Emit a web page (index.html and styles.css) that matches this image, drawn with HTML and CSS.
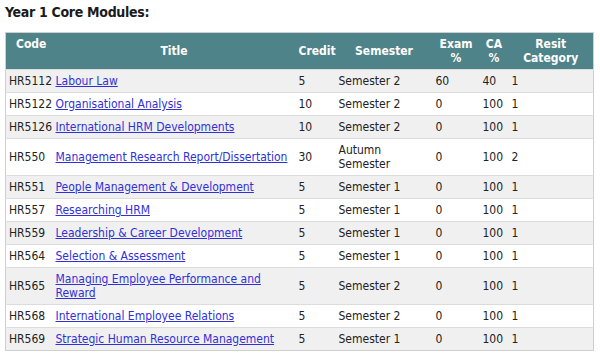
FILE: index.html
```html
<!DOCTYPE html>
<html lang="en">
<head>
    <meta charset="UTF-8">
    <title>Year 1 Core Modules</title>
    <link rel="stylesheet" href="styles.css">
</head>
<body>

    <h3 class="titulo">Year 1 Core Modules:</h3>

    <table class="modulos">
        <colgroup>
            <col class="col-code">
            <col class="col-title">
            <col class="col-credit">
            <col class="col-semester">
            <col class="col-exam">
            <col class="col-ca">
            <col class="col-resit">
        </colgroup>
        <thead>
            <tr>
                <th class="th-code">Code</th>
                <th>Title</th>
                <th>Credit</th>
                <th>Semester</th>
                <th class="th-top">Exam<br>%</th>
                <th class="th-top">CA<br>%</th>
                <th class="th-top">Resit<br>Category</th>
            </tr>
        </thead>
        <tbody>
            <tr>
                <td>HR5112</td><td><a href="#">Labour Law</a></td><td>5</td><td>Semester 2</td><td>60</td><td>40</td><td>1</td>
            </tr>
            <tr>
                <td>HR5122</td><td><a href="#">Organisational Analysis</a></td><td>10</td><td>Semester 2</td><td>0</td><td>100</td><td>1</td>
            </tr>
            <tr>
                <td>HR5126</td><td><a href="#">International HRM Developments</a></td><td>10</td><td>Semester 2</td><td>0</td><td>100</td><td>1</td>
            </tr>
            <tr>
                <td>HR550</td><td><a href="#">Management Research Report/Dissertation</a></td><td>30</td><td>Autumn Semester</td><td>0</td><td>100</td><td>2</td>
            </tr>
            <tr>
                <td>HR551</td><td><a href="#">People Management &amp; Development</a></td><td>5</td><td>Semester 1</td><td>0</td><td>100</td><td>1</td>
            </tr>
            <tr>
                <td>HR557</td><td><a href="#">Researching HRM</a></td><td>5</td><td>Semester 1</td><td>0</td><td>100</td><td>1</td>
            </tr>
            <tr>
                <td>HR559</td><td><a href="#">Leadership &amp; Career Development</a></td><td>5</td><td>Semester 1</td><td>0</td><td>100</td><td>1</td>
            </tr>
            <tr>
                <td>HR564</td><td><a href="#">Selection &amp; Assessment</a></td><td>5</td><td>Semester 1</td><td>0</td><td>100</td><td>1</td>
            </tr>
            <tr>
                <td>HR565</td><td><a href="#">Managing Employee Performance and Reward</a></td><td>5</td><td>Semester 2</td><td>0</td><td>100</td><td>1</td>
            </tr>
            <tr>
                <td>HR568</td><td><a href="#">International Employee Relations</a></td><td>5</td><td>Semester 2</td><td>0</td><td>100</td><td>1</td>
            </tr>
            <tr>
                <td>HR569</td><td><a href="#">Strategic Human Resource Management</a></td><td>5</td><td>Semester 1</td><td>0</td><td>100</td><td>1</td>
            </tr>
        </tbody>
    </table>

</body>
</html>
```

FILE: styles.css
```css
* {
    margin: 0;
    padding: 0;
    box-sizing: border-box;
}

body {
    background-color: #fff;
    color: #222;
    font-family: "DejaVu Sans Condensed", "DejaVu Sans", sans-serif;
    font-size: 12px;
    padding: 3px 5px;
}

.titulo {
    font-size: 14px;
    font-weight: bold;
    letter-spacing: -0.3px;
    color: #1a1a1a;
    line-height: 19px;
    margin-bottom: 10px;
}

.modulos {
    width: 588px;
    table-layout: fixed;
    border-collapse: collapse;
    border: 1px solid #cfcfcf;
}

.col-code { width: 47px; }
.col-title { width: 243px; }
.col-credit { width: 40px; }
.col-semester { width: 97px; }
.col-exam { width: 47px; }
.col-ca { width: 29px; }
.col-resit { width: 85px; }

.modulos th {
    background-color: #4e8389;
    color: #fff;
    font-weight: bold;
    line-height: 14px;
    padding: 4px 3px;
    height: 36px;
    text-align: center;
    vertical-align: middle;
}

.modulos th.th-code {
    text-align: left;
    vertical-align: top;
    padding-left: 10px;
}

.modulos th.th-top {
    vertical-align: top;
}

.modulos td {
    line-height: 14px;
    padding: 4px 3px;
    vertical-align: middle;
    border-top: 1px solid #dcdcdc;
}

.modulos tbody tr:nth-child(odd) {
    background-color: #f0f0f0;
}

.modulos a {
    color: #3030d8;
}
```
